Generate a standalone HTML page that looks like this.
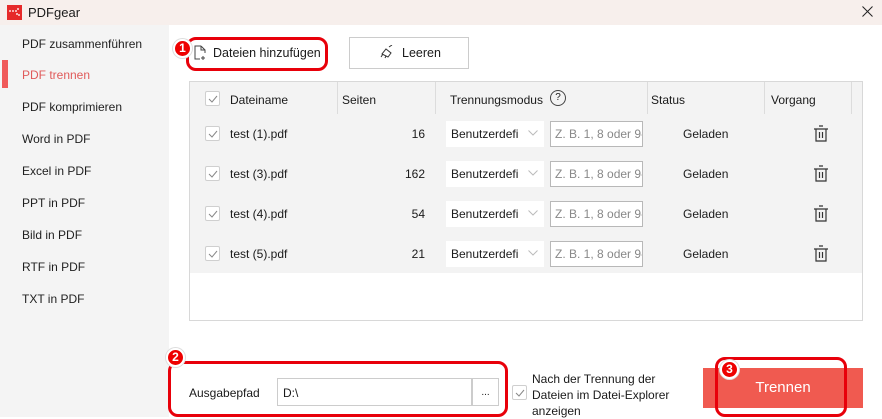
<!DOCTYPE html>
<html><head><meta charset="utf-8"><style>
*{margin:0;padding:0;box-sizing:border-box}
body{width:882px;height:417px;overflow:hidden;background:#fff;font-family:"Liberation Sans",sans-serif;font-size:12px;color:#1a1a1a;position:relative}
.a{position:absolute}
.title{left:0;top:0;width:882px;height:25px;background:#f7efec}
.side{left:0;top:25px;width:169px;height:392px;background:#f4f4f4}
.nav{left:22px;font-size:12px;color:#1f1f1f}
.cb{width:15px;height:15px;border:1px solid #cfcfcf;border-radius:2px;background:#fff}
.cb svg{position:absolute;left:2px;top:3px}
.sel{width:98px;height:26px;background:#fff}
.inp{width:93px;height:26px;background:#fff;border:1px solid #b8b8b8;color:#888;font-size:12px;padding:5px 0 0 4px;overflow:hidden;white-space:nowrap}
.badge{width:19px;height:19px;border-radius:50%;background:#e00;border:2px solid #fff;box-shadow:0 0 0 1px #ddd;color:#fff;font-weight:bold;font-size:12px;text-align:center;line-height:15px}
.ring{border:3px solid #e8000a;border-radius:10px}
</style></head><body>
<div class="a title"></div>
<div class="a" style="left:7px;top:5px;width:15px;height:15px;background:#e62a2a"><svg width="15" height="15"><path d="M2 6h2M5 6h2M8 6h2M11 3v2M10 8v2M12 9v2" stroke="#fff" stroke-width="1.3"/></svg></div>
<div class="a" style="left:28px;top:5px;font-size:13px">PDFgear</div>
<svg class="a" style="left:862px;top:6px" width="11" height="11"><path d="M0.5 0.5L10.5 10.5M10.5 0.5L0.5 10.5" stroke="#222" stroke-width="1"/></svg>
<div class="a side"></div>
<div class="a nav" style="top:37px">PDF zusammenführen</div>
<div class="a" style="left:2px;top:60px;width:6px;height:28px;background:#f05a5a"></div>
<div class="a nav" style="top:68px;color:#e05a5a">PDF trennen</div>
<div class="a nav" style="top:100px">PDF komprimieren</div>
<div class="a nav" style="top:132px">Word in PDF</div>
<div class="a nav" style="top:164px">Excel in PDF</div>
<div class="a nav" style="top:196px">PPT in PDF</div>
<div class="a nav" style="top:228px">Bild in PDF</div>
<div class="a nav" style="top:260px">RTF in PDF</div>
<div class="a nav" style="top:292px">TXT in PDF</div>

<!-- buttons -->
<div class="a ring" style="left:186px;top:37px;width:142px;height:34px"></div>
<svg class="a" style="left:193px;top:45px" width="14" height="16"><path d="M8 1H2v13h5M8 1l4 4v3M8 1v4h4M10 11v4M8 13h4" fill="none" stroke="#444" stroke-width="1"/></svg>
<div class="a" style="left:213px;top:46px;font-size:12.5px">Dateien hinzufügen</div>
<div class="a badge" style="left:173px;top:39px">1</div>
<div class="a" style="left:349px;top:37px;width:120px;height:32px;border:1px solid #ccc"></div>
<svg class="a" style="left:380px;top:45px" width="16" height="14"><path d="M9 2l3-2M6 4l5 4-3 4-6-3zM3 9l-2 3M6 11l-1 2" fill="none" stroke="#333" stroke-width="1"/></svg>
<div class="a" style="left:402px;top:46px;font-size:12.5px">Leeren</div>

<!-- table -->
<div class="a" style="left:189px;top:81px;width:674px;height:240px;border:1px solid #d8d8d8;background:#fff"></div>
<div class="a" style="left:190px;top:82px;width:672px;height:191px;background:#f3f3f3"></div>
<div class="a" style="left:337px;top:82px;width:1px;height:32px;background:#dcdcdc"></div>
<div class="a" style="left:435px;top:82px;width:1px;height:32px;background:#dcdcdc"></div>
<div class="a" style="left:647px;top:82px;width:1px;height:32px;background:#dcdcdc"></div>
<div class="a" style="left:764px;top:82px;width:1px;height:32px;background:#dcdcdc"></div>
<div class="a" style="left:851px;top:82px;width:1px;height:32px;background:#dcdcdc"></div>
<div class="a cb" style="left:205px;top:91px"><svg width="10" height="8"><path d="M1 4l3 3 5-6" fill="none" stroke="#888"/></svg></div>
<div class="a" style="left:230px;top:93px">Dateiname</div>
<div class="a" style="left:342px;top:93px">Seiten</div>
<div class="a" style="left:450px;top:93px">Trennungsmodus</div>
<div class="a" style="left:550px;top:90px;width:16px;height:16px;border:1.3px solid #444;border-radius:50%;font-size:10px;text-align:center;line-height:14px">?</div>
<div class="a" style="left:651px;top:93px">Status</div>
<div class="a" style="left:771px;top:93px">Vorgang</div>

<!-- rows -->
<div id="rows"></div>
<script></script>

<div class="a cb" style="left:205px;top:126px"><svg width="10" height="8"><path d="M1 4l3 3 5-6" fill="none" stroke="#888"/></svg></div>
<div class="a" style="left:230px;top:127px">test (1).pdf</div>
<div class="a" style="left:380px;top:127px;width:45px;text-align:right">16</div>
<div class="a sel" style="left:446px;top:121px"></div><div class="a" style="left:451px;top:127px">Benutzerdefi</div>
<svg class="a" style="left:528px;top:130px" width="10" height="6"><path d="M0.5 0.5l4.5 4.5 4.5-4.5" fill="none" stroke="#bbb"/></svg>
<div class="a inp" style="left:550px;top:121px">Z. B. 1, 8 oder 9-1</div>
<div class="a" style="left:683px;top:127px">Geladen</div>
<svg class="a" style="left:813px;top:125px" width="16" height="17"><path d="M6 1h4M1 4h14M3 4v12h10V4M6.5 7v6M9.5 7v6" fill="none" stroke="#333" stroke-width="1.2"/></svg>

<div class="a cb" style="left:205px;top:166px"><svg width="10" height="8"><path d="M1 4l3 3 5-6" fill="none" stroke="#888"/></svg></div>
<div class="a" style="left:230px;top:167px">test (3).pdf</div>
<div class="a" style="left:380px;top:167px;width:45px;text-align:right">162</div>
<div class="a sel" style="left:446px;top:161px"></div><div class="a" style="left:451px;top:167px">Benutzerdefi</div>
<svg class="a" style="left:528px;top:170px" width="10" height="6"><path d="M0.5 0.5l4.5 4.5 4.5-4.5" fill="none" stroke="#bbb"/></svg>
<div class="a inp" style="left:550px;top:161px">Z. B. 1, 8 oder 9-1</div>
<div class="a" style="left:683px;top:167px">Geladen</div>
<svg class="a" style="left:813px;top:165px" width="16" height="17"><path d="M6 1h4M1 4h14M3 4v12h10V4M6.5 7v6M9.5 7v6" fill="none" stroke="#333" stroke-width="1.2"/></svg>

<div class="a cb" style="left:205px;top:206px"><svg width="10" height="8"><path d="M1 4l3 3 5-6" fill="none" stroke="#888"/></svg></div>
<div class="a" style="left:230px;top:207px">test (4).pdf</div>
<div class="a" style="left:380px;top:207px;width:45px;text-align:right">54</div>
<div class="a sel" style="left:446px;top:201px"></div><div class="a" style="left:451px;top:207px">Benutzerdefi</div>
<svg class="a" style="left:528px;top:210px" width="10" height="6"><path d="M0.5 0.5l4.5 4.5 4.5-4.5" fill="none" stroke="#bbb"/></svg>
<div class="a inp" style="left:550px;top:201px">Z. B. 1, 8 oder 9-1</div>
<div class="a" style="left:683px;top:207px">Geladen</div>
<svg class="a" style="left:813px;top:205px" width="16" height="17"><path d="M6 1h4M1 4h14M3 4v12h10V4M6.5 7v6M9.5 7v6" fill="none" stroke="#333" stroke-width="1.2"/></svg>

<div class="a cb" style="left:205px;top:246px"><svg width="10" height="8"><path d="M1 4l3 3 5-6" fill="none" stroke="#888"/></svg></div>
<div class="a" style="left:230px;top:247px">test (5).pdf</div>
<div class="a" style="left:380px;top:247px;width:45px;text-align:right">21</div>
<div class="a sel" style="left:446px;top:241px"></div><div class="a" style="left:451px;top:247px">Benutzerdefi</div>
<svg class="a" style="left:528px;top:250px" width="10" height="6"><path d="M0.5 0.5l4.5 4.5 4.5-4.5" fill="none" stroke="#bbb"/></svg>
<div class="a inp" style="left:550px;top:241px">Z. B. 1, 8 oder 9-1</div>
<div class="a" style="left:683px;top:247px">Geladen</div>
<svg class="a" style="left:813px;top:245px" width="16" height="17"><path d="M6 1h4M1 4h14M3 4v12h10V4M6.5 7v6M9.5 7v6" fill="none" stroke="#333" stroke-width="1.2"/></svg>

<!-- bottom -->
<div class="a ring" style="left:168px;top:361px;width:340px;height:56px"></div>
<div class="a badge" style="left:166px;top:348px">2</div>
<div class="a" style="left:189px;top:386px">Ausgabepfad</div>
<div class="a" style="left:277px;top:378px;width:195px;height:28px;border:1px solid #ccc"></div>
<div class="a" style="left:283px;top:386px">D:\</div>
<div class="a" style="left:472px;top:378px;width:27px;height:28px;border:1px solid #ccc;text-align:center;line-height:28px;font-size:10px">...</div>
<div class="a cb" style="left:512px;top:385px"><svg width="10" height="8"><path d="M1 4l3 3 5-6" fill="none" stroke="#888"/></svg></div>
<div class="a" style="left:532px;top:371px;line-height:16px">Nach der Trennung der<br>Dateien im Datei-Explorer<br>anzeigen</div>
<div class="a" style="left:703px;top:368px;width:160px;height:40px;background:#f05a50;color:#fff;font-size:15px;text-align:center;line-height:40px">Trennen</div>
<div class="a ring" style="left:715px;top:357px;width:132px;height:60px"></div>
<div class="a badge" style="left:720px;top:360px">3</div>
</body></html>
